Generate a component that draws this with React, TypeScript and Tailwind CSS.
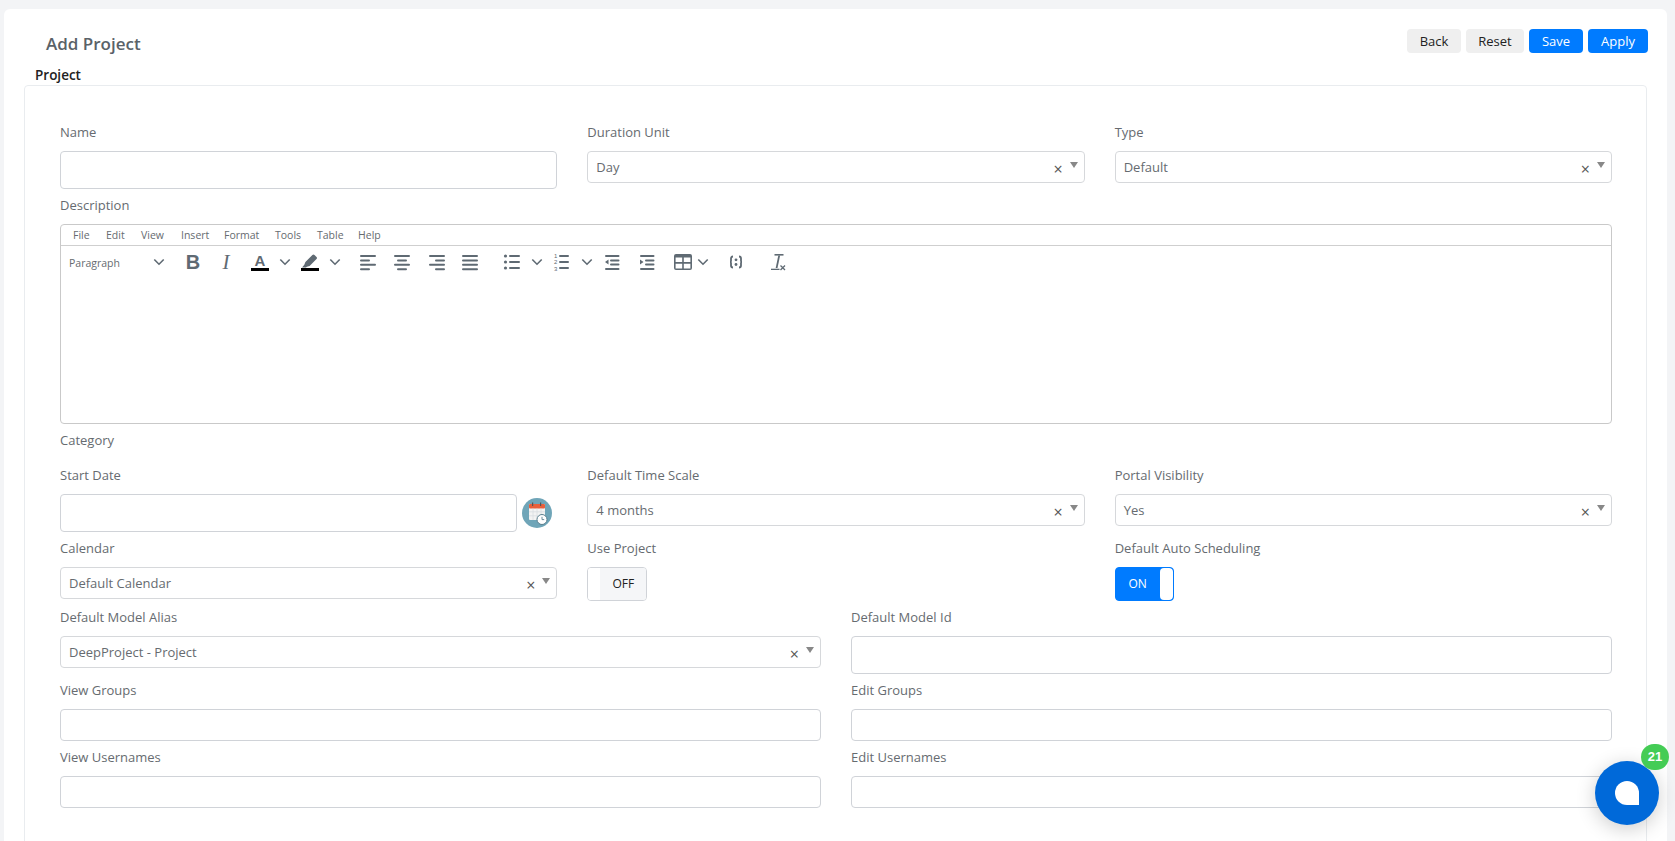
import React from "react";

const Label = ({ children }: { children: React.ReactNode }) => (
  <div className="h-[21px] mb-[8px] text-[13px] leading-[21px] text-[#666b70]">{children}</div>
);

const Input = ({ h = "h-[38px]" }: { h?: string }) => (
  <div className={`${h} w-full rounded-[4px] border border-[#d0d3d8] bg-white`} />
);

const Select = ({ value }: { value: string }) => (
  <div className="flex h-[32px] w-full items-center rounded-[4px] border border-[#d6d8db] bg-white pl-[8px] pr-[6px] text-[13px] text-[#666b70]">
    <span className="mt-[2px]">{value}</span>
    <span className="ml-auto mt-[3px] text-[16px] leading-none text-[#555]">×</span>
    <svg className="mb-[5px] ml-[7px]" width="8" height="6" viewBox="0 0 8 6">
      <path d="M0 0h8L4 6z" fill="#888" />
    </svg>
  </div>
);

const Field = ({ label, children }: { label: string; children: React.ReactNode }) => (
  <div className="mb-[6px] min-w-0">
    <Label>{label}</Label>
    {children}
  </div>
);

const Chev = ({ className = "" }: { className?: string }) => (
  <svg className={`shrink-0 ${className}`} width="16" height="24" viewBox="0 0 16 24">
    <path d="M3.3 9.5 8 14.2l4.7-4.7" fill="none" stroke="#5f6a73" strokeWidth="1.6" />
  </svg>
);

const Ico = ({ className = "", children }: { className?: string; children: React.ReactNode }) => (
  <svg className={`shrink-0 ${className}`} width="24" height="24" viewBox="0 0 24 24" fill="#5f6a73">
    {children}
  </svg>
);

const Lines = ({ rows }: { rows: [number, number][] }) => (
  <>
    {rows.map(([x, w], i) => (
      <rect key={i} x={x} y={5 + i * 4.4} width={w} height="2" rx="1" />
    ))}
  </>
);

const Toolbar = () => (
  <div className="flex h-[50px] items-start pt-[4px]">
    <span className="w-[86px] shrink-0 pl-[8px] text-[10.5px] leading-[26px] text-[#666b70]">Paragraph</span>
    <Chev className="mx-[4px]" />
    <span className="ml-[10px] w-[24px] shrink-0 text-center font-['Liberation_Sans',sans-serif] text-[20px] font-bold leading-[24px] text-[#5f6a73]">B</span>
    <span className="ml-[9px] w-[24px] shrink-0 text-center font-['Liberation_Serif',serif] text-[21px] italic leading-[24px] text-[#5f6a73]">I</span>
    <div className="relative ml-[10px] h-[24px] w-[24px] shrink-0 text-center">
      <span className="block font-['Liberation_Sans',sans-serif] text-[15px] font-bold leading-[22px] text-[#5f6a73]">A</span>
      <div className="absolute left-[3px] top-[18px] h-[3px] w-[18px] bg-black" />
    </div>
    <Chev className="ml-[5px]" />
    <Ico className="ml-[5px]">
      <path d="M4 17.600 6.300 14.800 7.400 11.900 14.400 5a1.500 1.500 0 0 1 2.100 0l2 2a1.500 1.500 0 0 1 0 2.100L11.600 16 8.800 16.800 8 17.600z" />
      <rect x="3" y="18" width="18" height="3" fill="#000" />
    </Ico>
    <Chev className="ml-[5px]" />
    <Ico className="ml-[13px]"><Lines rows={[[4, 16], [4, 10], [4, 16], [4, 10]]} /></Ico>
    <Ico className="ml-[10px]"><Lines rows={[[4, 16], [7, 10], [4, 16], [7, 10]]} /></Ico>
    <Ico className="ml-[11px]"><Lines rows={[[4, 16], [10, 10], [4, 16], [10, 10]]} /></Ico>
    <Ico className="ml-[9px]"><Lines rows={[[4, 16], [4, 16], [4, 16], [4, 16]]} /></Ico>
    <Ico className="ml-[18px]">
      <circle cx="5.500" cy="6" r="1.600" /><circle cx="5.500" cy="12" r="1.600" /><circle cx="5.500" cy="18" r="1.600" />
      <rect x="9" y="5" width="11" height="2" rx="1" /><rect x="9" y="11" width="11" height="2" rx="1" /><rect x="9" y="17" width="11" height="2" rx="1" />
    </Ico>
    <Chev className="ml-[5px]" />
    <Ico className="ml-[4px]">
      <rect x="10" y="5" width="10" height="2" rx="1" /><rect x="10" y="11" width="10" height="2" rx="1" /><rect x="10" y="17" width="10" height="2" rx="1" />
      <text x="5" y="8" fontSize="6" fontFamily="Liberation Sans, sans-serif">1</text>
      <text x="5" y="14" fontSize="6" fontFamily="Liberation Sans, sans-serif">2</text>
      <text x="5" y="20.500" fontSize="6" fontFamily="Liberation Sans, sans-serif">3</text>
    </Ico>
    <Chev className="ml-[6px]" />
    <Ico className="ml-[5px]">
      <rect x="5" y="5" width="14.500" height="2" rx="1" /><rect x="10" y="9.500" width="9.500" height="2" rx="1" /><rect x="10" y="13.500" width="9.500" height="2" rx="1" /><rect x="5" y="18" width="14.500" height="2" rx="1" />
      <path d="M8.500 9.500v5l-3.500-2.500z" />
    </Ico>
    <Ico className="ml-[11px]">
      <rect x="5" y="5" width="14.500" height="2" rx="1" /><rect x="5" y="18" width="14.500" height="2" rx="1" /><rect x="10" y="9.500" width="9.500" height="2" rx="1" /><rect x="10" y="13.500" width="9.500" height="2" rx="1" />
      <path d="M5 9.500v5l3.500-2.500z" />
    </Ico>
    <Ico className="ml-[12px]">
      <path fillRule="evenodd" d="M5 4h14a2 2 0 0 1 2 2v12a2 2 0 0 1-2 2H5a2 2 0 0 1-2-2V6a2 2 0 0 1 2-2zm-.4 3.500v4.600h6.600V7.500H4.600zm8.200 0v4.600h6.600V7.500h-6.600zM4.600 13.700v4.700h6.600v-4.700H4.600zm8.200 0v4.700h6.600v-4.700h-6.600z" />
    </Ico>
    <Chev />
    <Ico className="ml-[13px]">
      <path d="M9 6.500c-1.500 0-2 .7-2 2V11c0 .6-.5 1-1 1 .5 0 1 .4 1 1v2.500c0 1.300.5 2 2 2" fill="none" stroke="#5f6a73" strokeWidth="1.800" />
      <path d="M15 6.500c1.500 0 2 .7 2 2V11c0 .6.5 1 1 1-.5 0-1 .4-1 1v2.500c0 1.300-.5 2-2 2" fill="none" stroke="#5f6a73" strokeWidth="1.800" />
      <circle cx="12" cy="9.800" r="1.400" /><circle cx="12" cy="14.500" r="1.400" />
    </Ico>
    <Ico className="ml-[18px]">
      <rect x="8.500" y="4" width="9" height="1.600" />
      <path d="M12.300 5.500h1.800L11.500 18H9.700z" />
      <rect x="5" y="18.700" width="8.500" height="1.300" />
      <path d="m14.500 15.500 4.500 4.500m0-4.500L14.500 20" stroke="#5f6a73" strokeWidth="1.300" />
    </Ico>
  </div>
);

const menu = [
  { t: "File", c: "w-[33px]" },
  { t: "Edit", c: "w-[35px]" },
  { t: "View", c: "w-[40px]" },
  { t: "Insert", c: "w-[43px]" },
  { t: "Format", c: "w-[51px]" },
  { t: "Tools", c: "w-[42px]" },
  { t: "Table", c: "w-[41px]" },
  { t: "Help", c: "w-[40px]" },
];

const Editor = () => (
  <div className="h-[200px] w-full rounded-[4px] border border-[#c9c9c9] bg-white">
    <div className="flex h-[21px] items-center border-b border-[#cfcfcf] pl-[12px] pt-[2px] text-[10.5px] text-[#666b70]">
      {menu.map((m) => (
        <span key={m.t} className={m.c}>{m.t}</span>
      ))}
    </div>
    <Toolbar />
  </div>
);

const Btn = ({ children, primary, w }: { children: React.ReactNode; primary?: boolean; w: string }) => (
  <button
    className={`h-[24px] rounded-[4px] text-[13px] leading-[24px] ${w} ${primary ? "bg-[#007bff] text-white" : "bg-[#efefef] text-[#222]"}`}
  >
    {children}
  </button>
);

const CalIcon = () => (
  <svg className="shrink-0" width="30" height="30" viewBox="0 0 30 30">
    <circle cx="15" cy="15" r="15" fill="#6fa5b8" />
    <rect x="7" y="6" width="16" height="16" rx="1" fill="#f3f3f3" />
    <rect x="7" y="6" width="16" height="4.500" rx="1" fill="#e8603c" />
    <rect x="10" y="4.500" width="1.200" height="3.500" fill="#555" />
    <rect x="18" y="4.500" width="1.200" height="3.500" fill="#555" />
    <path d="M7 13.800h16M7 17.800h16M11 10.500V22M15 10.500V22M19 10.500V22" stroke="#d8dde0" strokeWidth="0.800" />
    <circle cx="20" cy="21.500" r="5" fill="#fff" stroke="#5b7f8e" strokeWidth="1" />
    <path d="M20 18.800v2.800h2.200" fill="none" stroke="#5b7f8e" strokeWidth="0.900" />
  </svg>
);

export default function App() {
  return (
    <div className="relative flex h-[841px] flex-col overflow-hidden bg-[#f3f4f6] pl-[4px] pr-[8px] pt-[9px] font-['Open_Sans','Noto_Sans',sans-serif]">
      <div className="flex min-h-0 flex-1 flex-col overflow-hidden rounded-t-[6px] bg-white pt-[20px]">
        <div className="flex h-[36px] shrink-0 items-start justify-between pr-[19px]">
          <h1 className="ml-[42px] mt-[2px] text-[17px] font-semibold leading-[26px] text-[#5a6268]">Add Project</h1>
          <div className="flex gap-[5px]">
            <Btn w="w-[54px]">Back</Btn>
            <Btn w="w-[58px]">Reset</Btn>
            <Btn w="w-[54px]" primary>Save</Btn>
            <Btn w="w-[60px]" primary>Apply</Btn>
          </div>
        </div>
        <div className="ml-[31px] h-[20px] shrink-0 text-[13.5px] font-semibold leading-[20px] text-[#222]">Project</div>
        <div className="ml-[20px] mr-[20px] shrink-0 rounded-[4px] border border-[#e9ecef] pb-[60px] pl-[35px] pr-[34px] pt-[36px]">
          <div className="grid grid-cols-3 gap-x-[30px]">
            <Field label="Name"><Input /></Field>
            <Field label="Duration Unit"><Select value="Day" /></Field>
            <Field label="Type"><Select value="Default" /></Field>
          </div>
          <Field label="Description"><Editor /></Field>
          <div className="mb-[14px] h-[21px] text-[13px] leading-[21px] text-[#666b70]">Category</div>
          <div className="grid grid-cols-3 gap-x-[30px]">
            <Field label="Start Date">
              <div className="flex items-center gap-[5px] pr-[5px]">
                <Input />
                <CalIcon />
              </div>
            </Field>
            <Field label="Default Time Scale"><Select value="4 months" /></Field>
            <Field label="Portal Visibility"><Select value="Yes" /></Field>
          </div>
          <div className="grid grid-cols-3 gap-x-[30px]">
            <Field label="Calendar"><Select value="Default Calendar" /></Field>
            <Field label="Use Project">
              <div className="flex h-[34px] w-[60px] overflow-hidden rounded-[4px] border border-[#d0d3d8]">
                <div className="w-[12px] bg-white" />
                <div className="flex flex-1 items-center justify-center bg-[#f5f6f8] text-[12px] text-[#222]">OFF</div>
              </div>
            </Field>
            <Field label="Default Auto Scheduling">
              <div className="flex h-[34px] w-[59px] overflow-hidden rounded-[4px] border border-[#007bff] bg-[#007bff]">
                <div className="flex w-[44px] items-center justify-center text-[12px] text-white">ON</div>
                <div className="flex-1 rounded-[4px] bg-white" />
              </div>
            </Field>
          </div>
          <div className="grid grid-cols-2 gap-x-[30px]">
            <Field label="Default Model Alias"><Select value="DeepProject - Project" /></Field>
            <Field label="Default Model Id"><Input /></Field>
            <Field label="View Groups"><Input h="h-[32px]" /></Field>
            <Field label="Edit Groups"><Input h="h-[32px]" /></Field>
            <Field label="View Usernames"><Input h="h-[32px]" /></Field>
            <Field label="Edit Usernames"><Input h="h-[32px]" /></Field>
          </div>
        </div>
      </div>
      <div className="absolute left-[1595px] top-[761px] flex h-[64px] w-[64px] items-center justify-center rounded-full bg-[#0069d9] shadow-[0_4px_20px_rgba(0,0,0,0.2)]">
        <div className="h-[24px] w-[24px] rounded-[12px_12px_0_12px] bg-white" />
      </div>
      <div className="absolute left-[1641px] top-[744px] flex h-[26px] w-[28px] items-center justify-center rounded-full bg-[#44cc55] font-['Liberation_Sans',sans-serif] text-[13px] font-bold text-white">21</div>
    </div>
  );
}
